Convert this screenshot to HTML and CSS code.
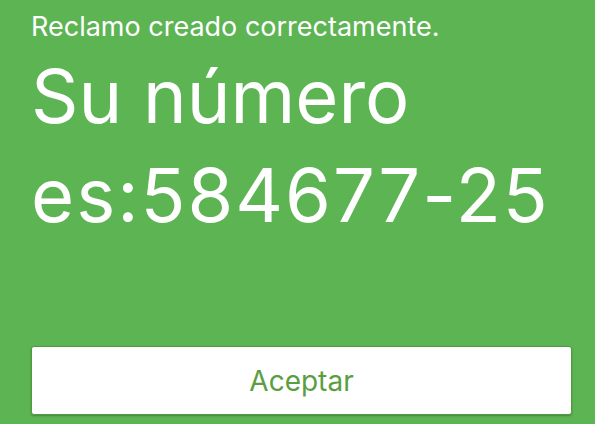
FILE: index.html
```html
<!DOCTYPE html>
<html lang="es">
<head>
<meta charset="utf-8">
<link rel="stylesheet" href="styles.css">
</head>
<body>
<main class="screen">
  <p class="subtitle">Reclamo creado correctamente.</p>
  <h1 class="title">Su número <span class="code">es:584677-25</span></h1>
  <button class="accept">Aceptar</button>
</main>
</body>
</html>
```
FILE: styles.css
```css
html, body {
  margin: 0;
  padding: 0;
  background: #5db453;
}
.screen {
  width: 595px;
  height: 424px;
  box-sizing: border-box;
  padding: 9px 23px 0 31px;
  display: flex;
  flex-direction: column;
  font-family: Inter, "Liberation Sans", Arial, sans-serif;
  color: #ffffff;
}
.subtitle {
  margin: 0;
  font-size: 27px;
  line-height: 36px;
}
.title {
  margin: 2px 0 0 0;
  font-size: 74px;
  font-weight: normal;
  line-height: 99px;
}
.code {
  letter-spacing: 2px;
}
.accept {
  margin-top: auto;
  margin-bottom: 9px;
  height: 69px;
  background: #ffffff;
  border: 1px solid #4f9b42;
  border-radius: 3px;
  box-shadow: 0 1px 2px rgba(0,0,0,0.25);
  font-family: Inter, "Liberation Sans", Arial, sans-serif;
  font-size: 28px;
  color: #5a9e41;
}
```
